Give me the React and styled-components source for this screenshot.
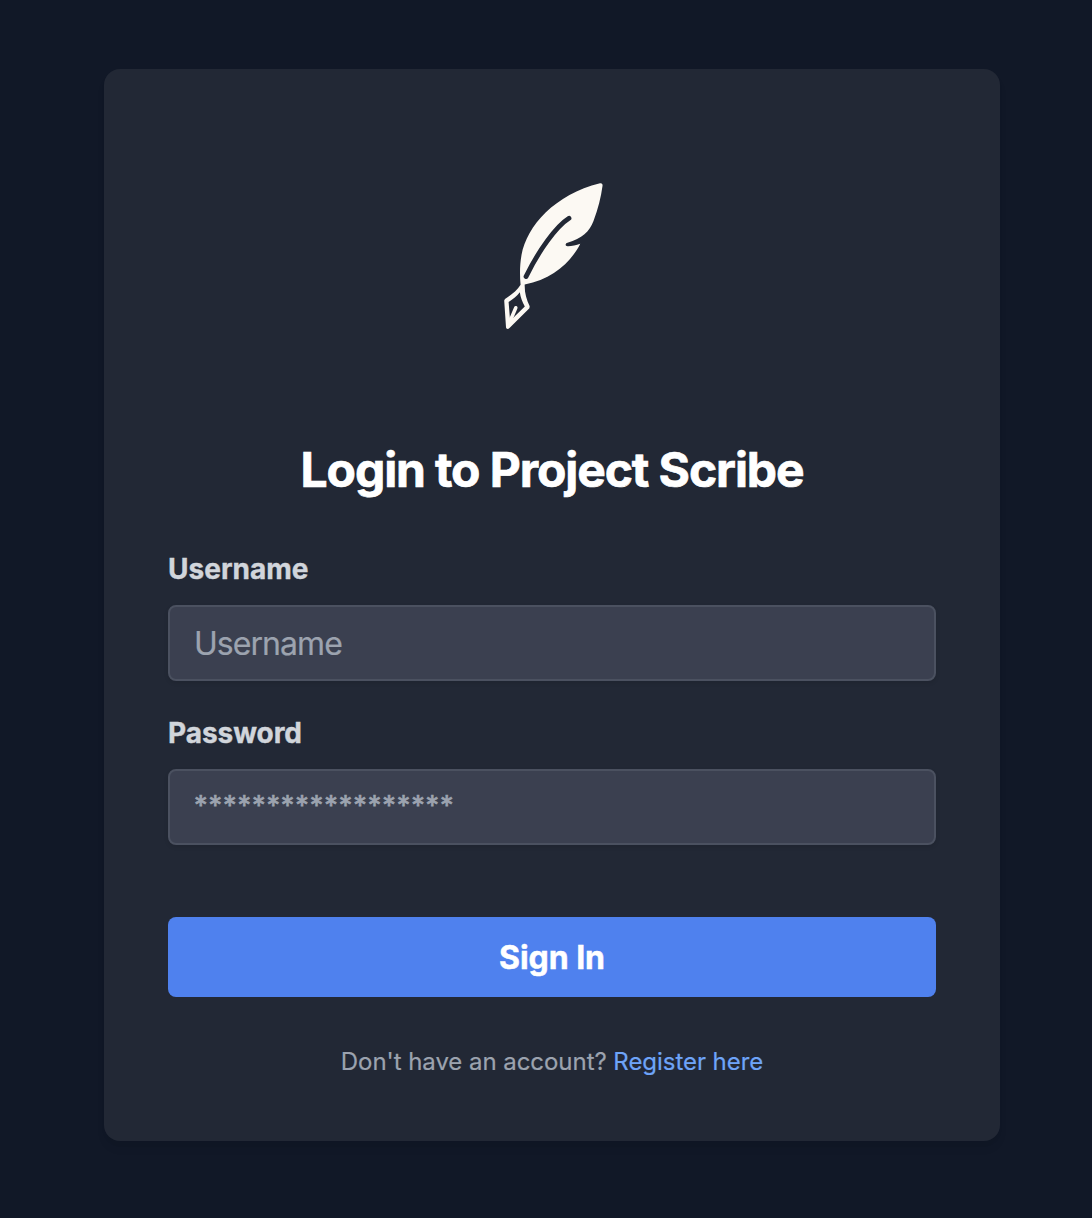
import React from "react";
import styled, { createGlobalStyle } from "styled-components";

const GlobalStyle = createGlobalStyle`
  *, *::before, *::after { box-sizing: border-box; }
  body {
    margin: 0;
    background: #111827;
    font-family: Inter, "Liberation Sans", sans-serif;
    -webkit-font-smoothing: antialiased;
  }
`;

const Page = styled.main`
  display: flex;
  justify-content: center;
  min-height: 1218px;
  padding: 69px 92px 77px 104px;
  background: #111827;
`;

const Card = styled.section`
  display: flex;
  flex-direction: column;
  width: 896px;
  height: 1072px;
  padding: 64px;
  border-radius: 16px;
  background: #222835;
  box-shadow: 0 8px 12px -2px rgba(0, 0, 0, 0.06), 0 4px 8px -4px rgba(0, 0, 0, 0.06);
`;

const Logo = styled.svg`
  display: block;
  flex-shrink: 0;
  width: 256px;
  height: 256px;
  margin: 0 auto 48px;
`;

const Title = styled.h1`
  margin: 0 0 48px;
  padding-top: 2px;
  color: #ffffff;
  font-size: 48px;
  font-weight: 700;
  line-height: 62px;
  letter-spacing: -1.1px;
  -webkit-text-stroke: 0.7px #ffffff;
  text-align: center;
  white-space: nowrap;
`;

const Form = styled.form`
  display: flex;
  flex-direction: column;
  gap: 32px;
`;

const Field = styled.div`
  display: flex;
  flex-direction: column;
  gap: 16px;
`;

const Label = styled.label`
  color: #d1d5db;
  font-size: 28px;
  font-weight: 700;
  line-height: 40px;
  letter-spacing: ${({ $tracking }) => $tracking};
  -webkit-text-stroke: 0.4px #d1d5db;
`;

const Input = styled.input`
  width: 100%;
  height: 76px;
  padding: 0 24px;
  border: 2px solid #4b5160;
  border-radius: 8px;
  outline: none;
  background: #3b4050;
  box-shadow: 0 2px 4px rgba(0, 0, 0, 0.1);
  color: #ffffff;
  font-family: inherit;
  font-size: 32px;
  letter-spacing: -0.95px;

  &::placeholder {
    color: #9ca3af;
    opacity: 1;
    -webkit-text-stroke: 0.2px #9ca3af;
  }
`;

const PasswordInput = styled(Input)`
  padding-bottom: 3px;
  font-size: 27px;
  letter-spacing: 0.95px;

  &::placeholder {
    -webkit-text-stroke: 0.7px #9ca3af;
  }
`;

const SubmitButton = styled.button`
  height: 80px;
  margin-top: 40px;
  padding: 0;
  border: 0;
  border-radius: 8px;
  background: #4f81ee;
  color: #ffffff;
  font-family: inherit;
  font-size: 32px;
  font-weight: 700;
  letter-spacing: -0.05px;
  -webkit-text-stroke: 0.5px #ffffff;
  cursor: pointer;
`;

const Footer = styled.p`
  margin: 49px 0 0;
  color: #9ca3af;
  font-size: 24px;
  line-height: 32px;
  letter-spacing: -0.05px;
  -webkit-text-stroke: 0.2px currentColor;
  text-align: center;
  white-space: nowrap;
`;

const RegisterLink = styled.a`
  color: #6ea4f8;
  text-decoration: none;
`;

function QuillLogo() {
  return (
    <Logo viewBox="424 133 256 256" role="img" aria-label="Project Scribe">
      <path
        fill="#fcf9f3"
        d="M600 183.2C602 182.9 602.8 184 602.5 186C601 197 598 209 593.5 221C589.5 231.500 582 238.500 567.500 242.800C565 243.600 565 246 567.500 246.200C571.500 246.300 576 245.300 580.300 243.700C571 262 552.500 279.500 524.700 284.500C524.500 293 526.500 299.500 529.700 306.300L529.400 308.300L509.500 328C508 329.500 506.200 329 506 327.300L504.200 300.500L505 298.900C511 295 517 290.800 520.600 284.800C519.700 276 519.700 265 521.500 255C527 225.500 555 194.500 600 183.200Z"
      />
      <path
        fill="none"
        stroke="#222835"
        strokeWidth="4.800"
        strokeLinecap="round"
        d="M569 218.300C556 226.500 538.500 251 526 276.600"
      />
      <path
        fill="#222835"
        d="M508.600 302C513 299.300 517 296 519.800 292.300C520.500 297.500 522.300 302 524.800 306.500L512.500 318.500L510 319Z"
      />
      <path
        fill="none"
        stroke="#fcf9f3"
        strokeWidth="3.500"
        strokeLinecap="round"
        d="M515.800 307.700L510.800 319.500"
      />
    </Logo>
  );
}

export default function App() {
  return (
    <>
      <GlobalStyle />
      <Page>
        <Card>
          <QuillLogo />
          <Title>Login to Project Scribe</Title>
          <Form onSubmit={(event) => event.preventDefault()}>
            <Field>
              <Label htmlFor="username" $tracking="0.02px">Username</Label>
              <Input id="username" type="text" placeholder="Username" />
            </Field>
            <Field>
              <Label htmlFor="password" $tracking="-0.05px">Password</Label>
              <PasswordInput id="password" type="password" placeholder="******************" />
            </Field>
            <SubmitButton type="submit">Sign In</SubmitButton>
          </Form>
          <Footer>
            Don't have an account? <RegisterLink href="#register">Register here</RegisterLink>
          </Footer>
        </Card>
      </Page>
    </>
  );
}
